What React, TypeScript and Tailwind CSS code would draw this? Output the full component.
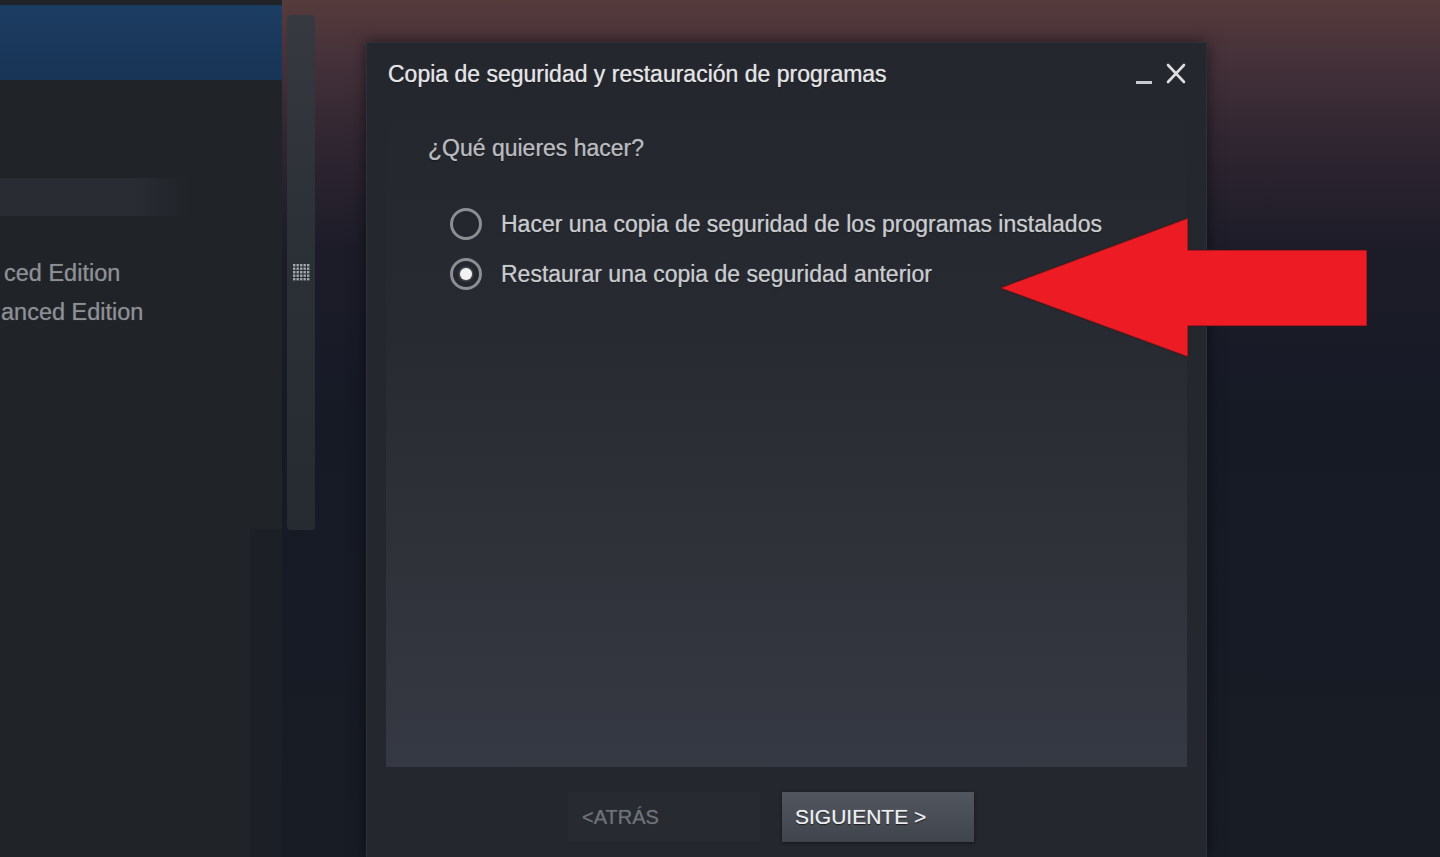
import React from "react";

const GridIcon = () => (
  <svg width="17" height="17" viewBox="0 0 17 17" className="block">
    {[0, 1, 2, 3, 4].map((r) =>
      [0, 1, 2, 3, 4].map((c) => (
        <rect key={`${r}-${c}`} x={c * 3.5} y={r * 3.5} width="2.4" height="2.4" fill="#a4a7ac" />
      ))
    )}
  </svg>
);

const Radio = ({ checked, label }: { checked?: boolean; label: string }) => (
  <div className="flex h-[50px] items-center">
    <div className="flex h-[32px] w-[32px] shrink-0 items-center justify-center rounded-full border-[3px] border-[#8b8e93] bg-[#24272d]">
      {checked && <div className="h-[12px] w-[12px] rounded-full bg-[#f2f2f2] shadow-[0_0_3px_rgba(255,255,255,0.6)]" />}
    </div>
    <span className="ml-[19px] text-[23px] leading-[28px] text-[#c8cbce] [text-shadow:0_0_1px_rgba(200,203,206,0.7),0_1px_1px_rgba(0,0,0,0.6)]">
      {label}
    </span>
  </div>
);

export default function App() {
  return (
    <div className="relative flex h-[857px] w-[1440px] overflow-hidden bg-[#171b24] bg-[linear-gradient(180deg,#563b3c_0px,#46323a_55px,#302631_140px,#1c1c28_250px,#151a25_420px,#181c24_857px)] font-['Liberation_Sans',Arial,sans-serif]">
      {/* library sidebar */}
      <aside className="flex h-full w-[282px] shrink-0 flex-col">
        <div className="bg-[#202328] pt-[5px]">
          <div className="h-[75px] bg-[linear-gradient(180deg,#1c3d62,#183456)]" />
          <div className="h-[98px]" />
          <div className="h-[38px] w-[190px] bg-[linear-gradient(90deg,#292c32_70%,#202328)]" />
          <div className="pb-[197px] pt-[38px] whitespace-nowrap text-[23.5px] leading-[39px] text-[#8d9095] [text-shadow:0_0_1px_rgba(141,144,149,0.6)]">
            <div className="pl-[4px]">ced Edition</div>
            <div className="pl-[1px]">anced Edition</div>
          </div>
        </div>
        <div className="flex flex-1">
          <div className="w-[250px] bg-[#202328]" />
          <div className="flex-1 bg-[#1c1f26]" />
        </div>
      </aside>

      {/* scrollbar column */}
      <div className="w-[84px] shrink-0 pl-[5px] pt-[15px]">
        <div className="relative h-[515px] w-[28px] rounded-sm bg-[linear-gradient(180deg,#363a40,#2c3037_40%,#262a31)]">
          <div className="absolute left-[6px] top-[249px]">
            <GridIcon />
          </div>
        </div>
      </div>

      {/* dialog */}
      <section className="mt-[42px] flex h-[815px] w-[841px] shrink-0 flex-col border-t border-l border-r border-[#2d3139] bg-[#24272d] shadow-[0_0_14px_rgba(0,0,0,0.55)]">
        <header className="flex h-[57px] items-start justify-between pl-[21px] pr-[20px] pt-[17px]">
          <h1 className="text-[23px] leading-[28px] text-[#e2e4e6] [text-shadow:0_0_1px_rgba(226,228,230,0.8),0_1px_1px_rgba(0,0,0,0.8)]">
            Copia de seguridad y restauración de programas
          </h1>
          <div className="flex items-start gap-[14px]">
            <span className="mt-[4px] block h-[20px] w-[16px] border-b-[3px] border-[#c9cbce]" />
            <svg width="20" height="21" viewBox="0 0 20 21" className="mt-[3px]">
              <path d="M2 2 L18 19 M18 2 L2 19" stroke="#dcdee0" strokeWidth="2.6" strokeLinecap="round" />
            </svg>
          </div>
        </header>

        <div className="mx-[19px] h-[667px] shrink-0 bg-[linear-gradient(180deg,#24272d_0%,#272a30_35%,#2f3239_70%,#353943_100%)] pt-[34px]">
          <p className="pl-[42px] text-[23px] leading-[28px] text-[#b8bbbf] [text-shadow:0_0_1px_rgba(184,187,191,0.7),0_1px_1px_rgba(0,0,0,0.6)]">
            ¿Qué quieres hacer?
          </p>
          <div className="mt-[37px] pl-[64px]">
            <Radio label="Hacer una copia de seguridad de los programas instalados" />
            <Radio checked label="Restaurar una copia de seguridad anterior" />
          </div>
        </div>

        <footer className="flex gap-[22px] pl-[201px] pt-[25px]">
          <div className="flex h-[50px] w-[192px] items-center bg-[#272a30] pl-[14px] text-[20px] text-[#6f7379] [text-shadow:0_0_1px_rgba(111,115,121,0.6)]">
            &lt;ATRÁS
          </div>
          <div className="flex h-[50px] w-[192px] items-center bg-[linear-gradient(180deg,#52565f,#40444c)] pl-[13px] text-[21px] text-[#eceef0] shadow-[0_1px_3px_rgba(0,0,0,0.5)] [text-shadow:0_0_1px_rgba(236,238,240,0.7),0_1px_1px_rgba(0,0,0,0.8)]">
            SIGUIENTE &gt;
          </div>
        </footer>
      </section>

      {/* red annotation arrow */}
      <svg
        className="absolute left-[996px] top-[214px]"
        width="376"
        height="148"
        viewBox="996 214 376 148"
      >
        <path
          d="M1000 288 L1188 218 L1188 250 L1367 250 L1367 326 L1188 326 L1188 357 Z"
          fill="#ed1c24"
          stroke="#3a1416"
          strokeOpacity="0.5"
          strokeWidth="1.5"
          strokeLinejoin="round"
        />
      </svg>
    </div>
  );
}
